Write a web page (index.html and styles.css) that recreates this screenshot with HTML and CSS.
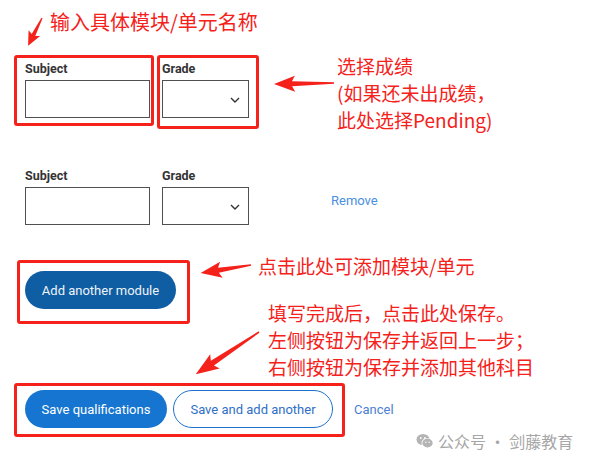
FILE: index.html
```html
<!DOCTYPE html>
<html lang="zh-CN">
<head>
    <meta charset="UTF-8">
    <meta name="viewport" content="width=device-width, initial-scale=1.0">
    <title>Qualifications</title>
    <link rel="stylesheet" href="styles.css">
</head>
<body>
    <main class="form">
        <div class="row row-first">
            <div class="field field-subject">
                <label>Subject</label>
                <input type="text">
            </div>
            <div class="field field-grade">
                <label>Grade</label>
                <div class="select">
                    <svg width="10" height="6" viewBox="0 0 10 6"><path d="M1 1 L5 5 L9 1" fill="none" stroke="#333" stroke-width="1.4"/></svg>
                </div>
            </div>
        </div>
        <div class="row row-second">
            <div class="field field-subject">
                <label>Subject</label>
                <input type="text">
            </div>
            <div class="field field-grade">
                <label>Grade</label>
                <div class="select">
                    <svg width="10" height="6" viewBox="0 0 10 6"><path d="M1 1 L5 5 L9 1" fill="none" stroke="#333" stroke-width="1.4"/></svg>
                </div>
            </div>
            <a class="remove" href="#">Remove</a>
        </div>
        <button class="btn btn-dark">Add another module</button>
        <div class="actions">
            <button class="btn btn-primary">Save qualifications</button>
            <button class="btn btn-outline">Save and add another</button>
            <a class="cancel" href="#">Cancel</a>
        </div>
    </main>

    <!-- red annotations drawn over the form -->
    <div class="notes">
        <div class="mark mark-subject"></div>
        <div class="mark mark-grade"></div>
        <div class="mark mark-add"></div>
        <div class="mark mark-save"></div>

        <p class="note note-top">输入具体模块/单元名称</p>
        <p class="note note-grade">选择成绩<br>(如果还未出成绩，<br>此处选择Pending)</p>
        <p class="note note-add">点击此处可添加模块/单元</p>
        <p class="note note-save">填写完成后，点击此处保存。<br>左侧按钮为保存并返回上一步；<br>右侧按钮为保存并添加其他科目</p>

        <svg class="arrows" width="591" height="465" viewBox="0 0 591 465">
            <g transform="translate(42 18) rotate(116.6)" fill="#f5211b">
                <polygon points="0,-0.6 19,-2 17,-6.5 31,0 17,6.5 19,2 0,0.6"/>
            </g>
            <g transform="translate(334 83) rotate(179)" fill="#f5211b">
                <polygon points="0,-0.8 42,-2.6 39,-8 60,0 39,8 42,2.6 0,0.8"/>
            </g>
            <g transform="translate(251 265) rotate(170.9)" fill="#f5211b">
                <polygon points="0,-0.8 33,-2.6 30,-8 51,0 30,8 33,2.6 0,0.8"/>
            </g>
            <g transform="translate(259 332) rotate(146.3)" fill="#f5211b">
                <polygon points="0,-0.8 56,-2.8 53,-8.5 76,0 53,8.5 56,2.8 0,0.8"/>
            </g>
        </svg>
    </div>

    <div class="watermark">
        <svg width="18" height="16" viewBox="0 0 18 16">
            <ellipse cx="7" cy="6.5" rx="6.5" ry="5.5" fill="#b4b4b4"/>
            <ellipse cx="11.5" cy="10" rx="6" ry="5" fill="#fff"/>
            <ellipse cx="11.5" cy="10" rx="5.2" ry="4.4" fill="#b4b4b4"/>
            <circle cx="4.8" cy="5" r="0.9" fill="#fff"/>
            <circle cx="8.8" cy="5" r="0.9" fill="#fff"/>
            <circle cx="9.8" cy="9.3" r="0.7" fill="#fff"/>
            <circle cx="13.2" cy="9.3" r="0.7" fill="#fff"/>
        </svg>
        <span>公众号 · 剑藤教育</span>
    </div>
</body>
</html>
```

FILE: styles.css
```css
body {
    margin: 0;
    width: 591px;
    height: 465px;
    background: #fff;
    font-family: Roboto, "Noto Sans", Arial, sans-serif;
    position: relative;
    overflow: hidden;
}
.form {
    padding: 61px 0 0 25px;
}
.row {
    display: flex;
    align-items: flex-end;
    gap: 12px;
}
.row-second {
    margin-top: 50px;
}
.field label {
    display: block;
    font-size: 12.5px;
    font-weight: 700;
    line-height: 16px;
    color: #333;
    margin-bottom: 3px;
}
.field input {
    display: block;
    width: 125px;
    height: 38px;
    box-sizing: border-box;
    border: 1px solid #505050;
    border-radius: 0;
    margin: 0;
}
.select {
    width: 87px;
    height: 38px;
    box-sizing: border-box;
    border: 1px solid #505050;
    display: flex;
    align-items: center;
    justify-content: flex-end;
    padding: 2px 8px 0 0;
}
.remove {
    margin: 0 0 5px 70px;
    line-height: 38px;
    font-size: 13px;
    color: #4a8fe2;
    text-decoration: none;
}
.btn {
    height: 38px;
    border-radius: 19px;
    font-family: Roboto, "Noto Sans", Arial, sans-serif;
    font-size: 13px;
    padding: 0 16px;
    cursor: pointer;
    box-sizing: border-box;
}
.btn-dark {
    display: block;
    margin-top: 46px;
    width: 151px;
    background-color: #0f5ea3;
    color: #eef3f8;
    border: none;
}
.actions {
    display: flex;
    align-items: center;
    margin-top: 81px;
}
.btn-primary {
    width: 142px;
    background-color: #1675d1;
    color: #fff;
    border: none;
}
.btn-outline {
    width: 160px;
    margin-left: 6px;
    background: #fff;
    color: #2f6fc6;
    border: 1px solid #1f72cc;
}
.cancel {
    margin-left: 21px;
    font-size: 13px;
    color: #4b80d2;
    text-decoration: none;
}

/* annotation layer */
.notes {
    position: absolute;
    left: 0;
    top: 0;
    width: 591px;
    height: 465px;
    pointer-events: none;
}
.arrows {
    position: absolute;
    left: 0;
    top: 0;
}
.mark {
    position: absolute;
    border: 3px solid #f5211b;
    border-radius: 3px;
    box-sizing: border-box;
}
.mark-subject {
    left: 14px;
    top: 55px;
    width: 140px;
    height: 71px;
}
.mark-grade {
    left: 157px;
    top: 55px;
    width: 102px;
    height: 74px;
}
.mark-add {
    left: 17px;
    top: 260px;
    width: 173px;
    height: 64px;
}
.mark-save {
    left: 14px;
    top: 383px;
    width: 331px;
    height: 54px;
}
.note {
    position: absolute;
    margin: 0;
    font-family: "Noto Sans CJK SC", "Microsoft YaHei", sans-serif;
    font-size: 19px;
    color: #f5211b;
    white-space: nowrap;
}
.note-top {
    left: 50px;
    top: 8px;
    font-size: 20px;
    line-height: 28px;
}
.note-grade {
    left: 337px;
    top: 52px;
    line-height: 27px;
}
.note-add {
    left: 258px;
    top: 252px;
    line-height: 27px;
}
.note-save {
    left: 268px;
    top: 299px;
    line-height: 27px;
}
.watermark {
    position: absolute;
    left: 416px;
    top: 429px;
    display: flex;
    align-items: center;
    gap: 4px;
    font-family: "Noto Sans CJK SC", sans-serif;
    font-size: 16px;
    color: #a6a6a6;
}
```
